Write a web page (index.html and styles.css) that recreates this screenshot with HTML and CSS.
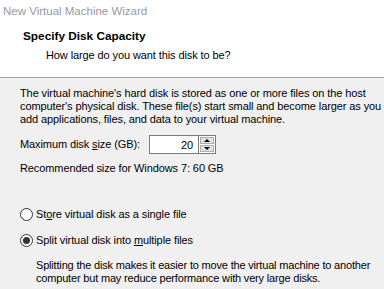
FILE: index.html
```html
<!DOCTYPE html>
<html>
<head>
<meta charset="utf-8">
<link rel="stylesheet" href="styles.css">
</head>
<body>
<div class="wizard">
  <div class="header">
    <div class="title">New Virtual Machine Wizard</div>
    <div class="heading">Specify Disk Capacity</div>
    <div class="subheading">How large do you want this disk to be?</div>
  </div>
  <div class="content">
    <p class="intro">The virtual machine's hard disk is stored as one or more files on the host<br>computer's physical disk. These file(s) start small and become larger as you<br>add applications, files, and data to your virtual machine.</p>
    <div class="size-row">
      <label class="size-label">Maximum disk <u>s</u>ize (GB):</label>
      <div class="spin">
        <div class="spin-value">20</div>
        <div class="spin-buttons">
          <div class="spin-btn"><span class="tri-up"></span></div>
          <div class="spin-btn"><span class="tri-down"></span></div>
        </div>
      </div>
    </div>
    <div class="recommended">Recommended size for Windows 7: 60 GB</div>
    <div class="options">
      <div class="radio-row">
        <span class="radio"></span>
        <span>St<u>o</u>re virtual disk as a single file</span>
      </div>
      <div class="radio-row">
        <span class="radio checked"></span>
        <span>Split virtual disk into <u>m</u>ultiple files</span>
      </div>
      <p class="desc">Splitting the disk makes it easier to move the virtual machine to another<br>computer but may reduce performance with very large disks.</p>
    </div>
  </div>
</div>
</body>
</html>
```
FILE: styles.css
```css
html, body {
  margin: 0;
  padding: 0;
}
body {
  width: 384px;
  height: 289px;
  overflow: hidden;
  background: #f0f0f0;
  font-family: "Liberation Sans", Arial, sans-serif;
  font-size: 11px;
  letter-spacing: -0.1px;
  line-height: 13px;
  color: #000;
}
.header {
  background: #fff;
  height: 78px;
  border-bottom: 1px solid #a0a0a0;
  box-sizing: border-box;
  padding: 5px 0 0 3px;
}
.title {
  color: #9a9a9a;
  font-size: 11.5px;
  letter-spacing: 0;
}
.heading {
  font-weight: bold;
  font-size: 11.8px;
  letter-spacing: 0;
  margin: 12px 0 0 20px;
}
.subheading {
  margin: 6px 0 0 43px;
}
.content {
  padding: 9px 0 0 20px;
}
.intro {
  margin: 0;
  white-space: nowrap;
}
.size-row {
  display: flex;
  align-items: center;
  margin-top: 9px;
  height: 19px;
}
.size-label {
  width: 129px;
  white-space: nowrap;
}
.spin {
  display: flex;
  height: 19px;
}
.spin-value {
  width: 50px;
  box-sizing: border-box;
  border: 1px solid #7a7a7a;
  background: #fff;
  text-align: right;
  padding: 3px 5px 0 0;
}
.spin-buttons {
  display: flex;
  flex-direction: column;
  width: 17px;
  box-sizing: border-box;
  border: 1px solid #7a7a7a;
  border-left: none;
  background: #fff;
  padding: 1px;
  gap: 1px;
}
.spin-btn {
  flex: 1;
  background: #e1e1e1;
  border: 1px solid #adadad;
  display: flex;
  align-items: center;
  justify-content: center;
}
.tri-up, .tri-down {
  width: 0;
  height: 0;
  border-left: 3px solid transparent;
  border-right: 3px solid transparent;
}
.tri-up {
  border-bottom: 3px solid #000;
}
.tri-down {
  border-top: 3px solid #000;
}
.recommended {
  margin-top: 8px;
}
.options {
  margin-top: 33px;
}
.radio-row {
  display: flex;
  align-items: center;
  gap: 3px;
  height: 13px;
  margin-bottom: 13px;
}
.radio {
  width: 11px;
  height: 11px;
  border: 1px solid #333;
  border-radius: 50%;
  background: #fff;
  position: relative;
  box-sizing: content-box;
}
.radio.checked::after {
  content: "";
  position: absolute;
  left: 2px;
  top: 2px;
  width: 7px;
  height: 7px;
  border-radius: 50%;
  background: #333;
}
.desc {
  margin: -1px 0 0 16px;
  white-space: nowrap;
  letter-spacing: -0.18px;
}
```
